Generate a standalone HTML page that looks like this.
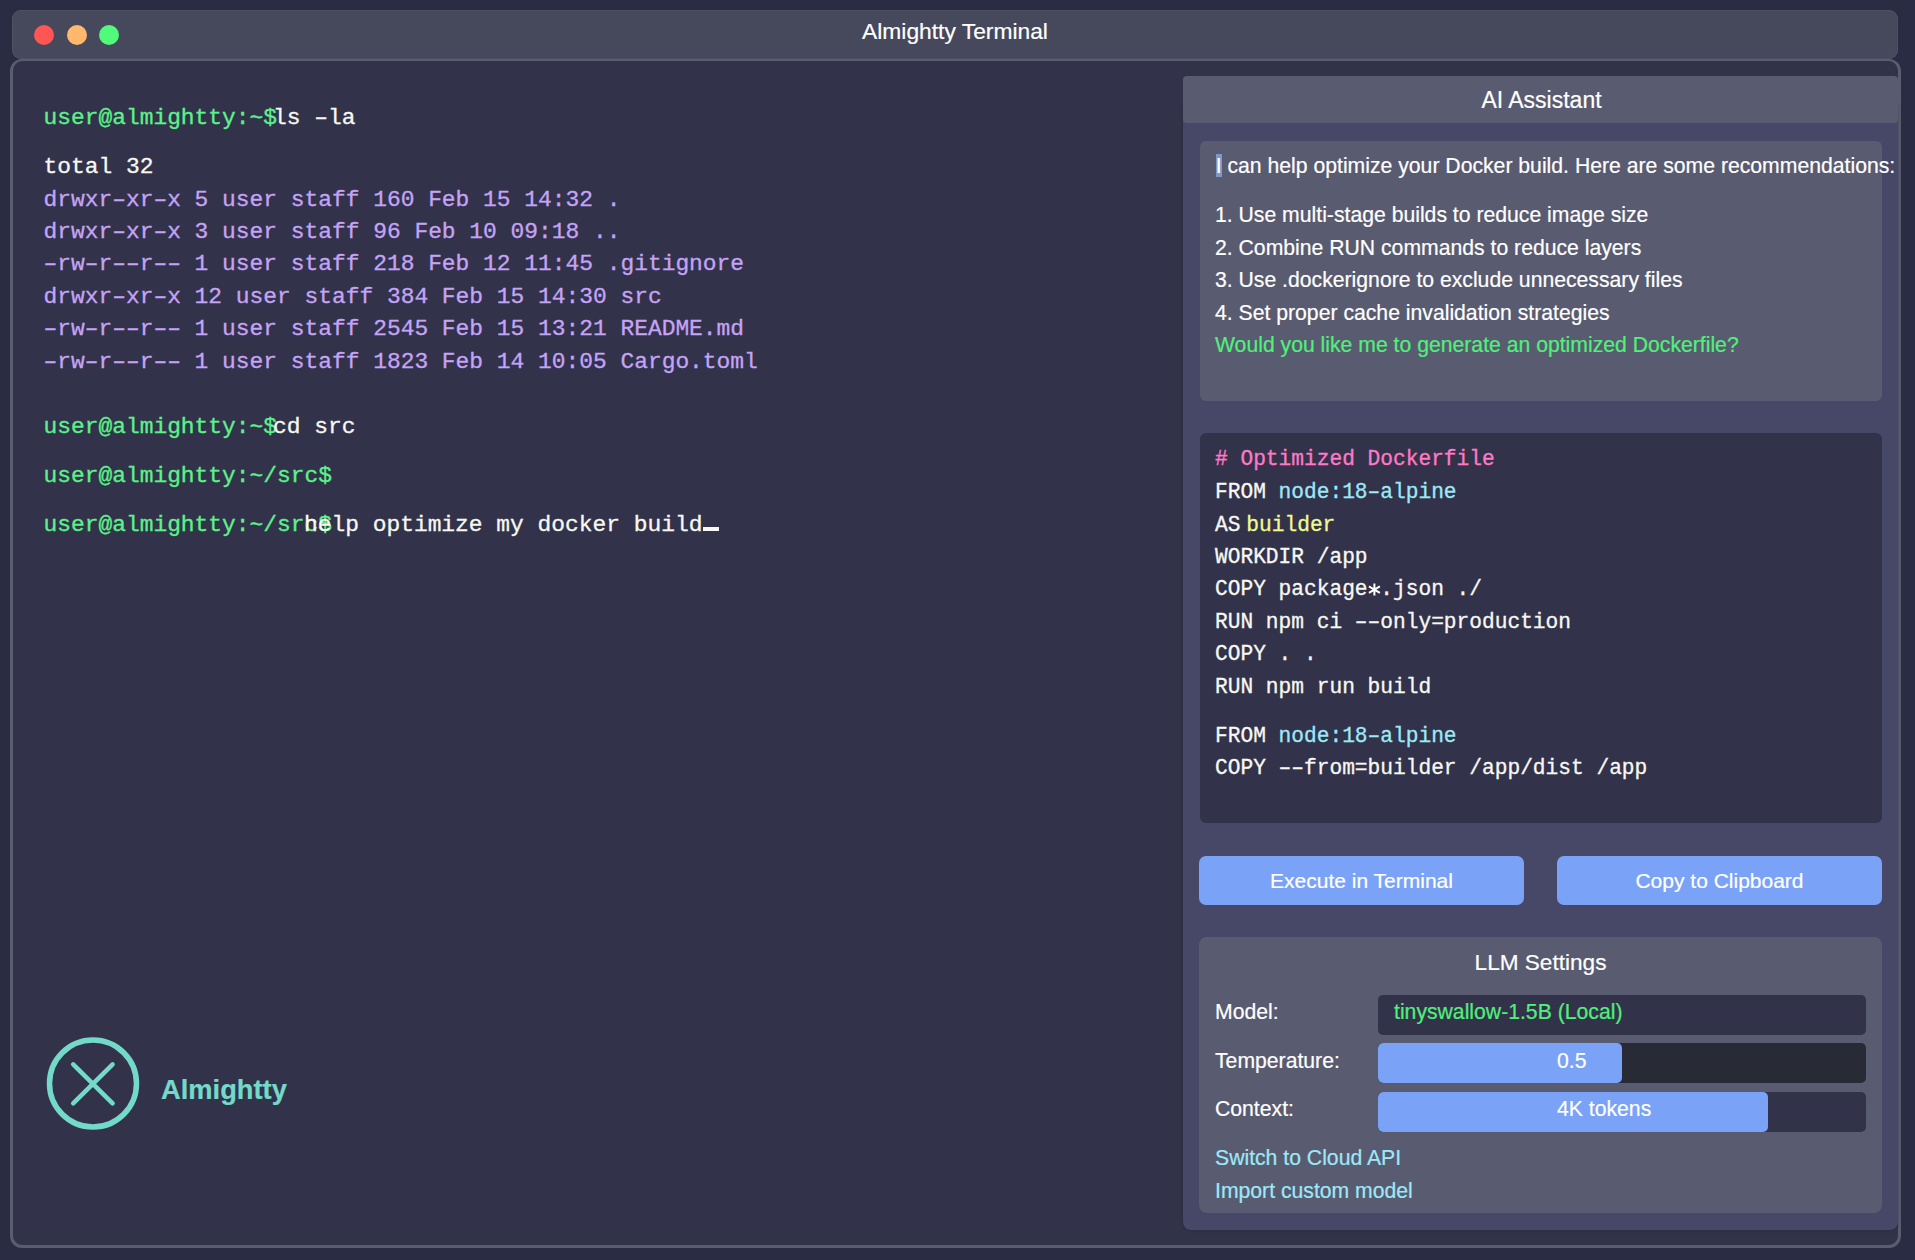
<!DOCTYPE html>
<html><head><meta charset="utf-8">
<style>
*{box-sizing:border-box;margin:0;padding:0}
html,body{width:1915px;height:1260px;overflow:hidden;background:#2a2c43}
body{position:relative;font-family:"Liberation Sans",sans-serif;color:#fff;-webkit-text-stroke:0.2px currentColor}
.abs{position:absolute}
#titlebar{left:12px;top:9.5px;width:1886px;height:49px;background:#46485c;border-radius:9px;box-shadow:inset 0 0 0 1px #4e5064}
.dot{position:absolute;width:20px;height:20px;border-radius:50%;top:24.7px}
#title{position:absolute;left:0;top:9.2px;width:1910px;text-align:center;font-size:22.8px;line-height:44px}
#win{left:10px;top:58.8px;width:1891px;height:1189.2px;border:3px solid #5a5c70;border-top-width:2px;border-radius:12px;background:#32334a}
.mono{font-family:"Liberation Mono",monospace;font-size:22.9px;white-space:pre;line-height:32.4px;-webkit-text-stroke:0.3px currentColor}
.code{font-size:21.2px;line-height:32.55px}
.cmd{margin-left:-4px}
.tl{position:absolute;left:43.5px}
.g{color:#5cf28a}.w{color:#f8f8f2}.p{color:#c6a3f6}.pk{color:#ff79c6}.cy{color:#9de9f8}.yl{color:#f1fa8c}
#panel{left:1183px;top:100px;width:715px;height:1130px;background:#474867;border-radius:8px;box-shadow:0 0 4px rgba(0,0,0,.18)}
#phead{left:1183px;top:75.5px;width:715px;height:47.5px;background:#595b70;border-radius:4px;text-align:center;font-size:23px;line-height:48px;padding-left:2px}
#msg{left:1199.5px;top:140.5px;width:682.5px;height:260px;background:#595b70;border-radius:6px}
.st{position:absolute;left:1215px;font-size:21.2px;line-height:32.4px;white-space:pre}
#code{left:1199.5px;top:433.2px;width:682.5px;height:390px;background:#32334a;border-radius:6px}
.btn{position:absolute;top:856px;width:325px;height:49px;background:#7aa2f7;border-radius:7px;text-align:center;font-size:21px;line-height:50.5px;color:#fff}
#llm{left:1199px;top:937px;width:683px;height:276px;background:#595b70;border-radius:8px}
.track{position:absolute;left:1378px;width:488px;height:40px;background:#282a36;border-radius:5px;overflow:hidden}
.fill{position:absolute;left:0;top:0;height:40px;background:#7aa2f7;border-radius:5px}
.lnk{color:#9de9f8}
</style></head><body>
<div id="titlebar" class="abs"></div>
<div class="dot" style="left:34px;background:#ff5555"></div>
<div class="dot" style="left:66.5px;background:#ffb86c"></div>
<div class="dot" style="left:99px;background:#50fa7b"></div>
<div id="title">Almightty Terminal</div>
<div id="win" class="abs"></div>

<!-- terminal lines -->
<div class="mono tl" style="top:101.9px"><span class="g">user@almightty:~$</span><span class="w cmd">ls –la</span></div>
<div class="mono tl w" style="top:150.9px">total 32</div>
<div class="mono tl p" style="top:183.5px">drwxr–xr–x 5 user staff 160 Feb 15 14:32 .</div>
<div class="mono tl p" style="top:215.9px">drwxr–xr–x 3 user staff 96 Feb 10 09:18 ..</div>
<div class="mono tl p" style="top:248.3px">–rw–r––r–– 1 user staff 218 Feb 12 11:45 .gitignore</div>
<div class="mono tl p" style="top:280.7px">drwxr–xr–x 12 user staff 384 Feb 15 14:30 src</div>
<div class="mono tl p" style="top:313.1px">–rw–r––r–– 1 user staff 2545 Feb 15 13:21 README.md</div>
<div class="mono tl p" style="top:345.5px">–rw–r––r–– 1 user staff 1823 Feb 14 10:05 Cargo.toml</div>
<div class="mono tl" style="top:410.8px"><span class="g">user@almightty:~$</span><span class="w cmd">cd src</span></div>
<div class="mono tl g" style="top:459.8px">user@almightty:~/src$</div>
<div class="mono tl g" style="top:508.8px">user@almightty:~/src$</div>
<div class="mono abs w" style="left:304px;top:508.8px">help optimize my docker build<span style="display:inline-block;width:16px;height:3.5px;background:#f8f8f2;vertical-align:baseline;margin-left:1px"></span></div>

<!-- logo -->
<svg class="abs" style="left:40px;top:1031px" width="108" height="108" viewBox="0 0 108 108">
<circle cx="53" cy="52.5" r="43.5" fill="none" stroke="#73daca" stroke-width="5.5"/>
<path d="M33.2 33.3 L72.6 72.3 M72.6 33.3 L33.2 72.3" stroke="#73daca" stroke-width="4.5" stroke-linecap="round"/>
</svg>
<div class="abs" style="left:161px;top:1073px;font-size:27.3px;font-weight:bold;color:#73daca;line-height:34px">Almightty</div>

<!-- AI panel -->
<div id="panel" class="abs"></div>
<div id="phead" class="abs">AI Assistant</div>
<div id="msg" class="abs"></div>
<div class="st" style="top:150.3px;left:1215.7px"><span style="background:#7e98c9">I</span> can help optimize your Docker build. Here are some recommendations:</div>
<div class="st" style="top:199.4px">1. Use multi-stage builds to reduce image size</div>
<div class="st" style="top:231.8px">2. Combine RUN commands to reduce layers</div>
<div class="st" style="top:264.2px">3. Use .dockerignore to exclude unnecessary files</div>
<div class="st" style="top:296.6px">4. Set proper cache invalidation strategies</div>
<div class="st" style="top:329px;color:#50f07b">Would you like me to generate an optimized Dockerfile?</div>

<div id="code" class="abs"></div>
<div class="mono code tl pk" style="left:1215px;top:443px"># Optimized Dockerfile</div>
<div class="mono code tl w" style="left:1215px;top:475.5px">FROM <span class="cy">node:18–alpine</span></div>
<div class="mono code tl w" style="left:1215px;top:508px">AS<span style="font-family:'Liberation Sans'"> </span><span class="yl">builder</span></div>
<div class="mono code tl w" style="left:1215px;top:540.5px">WORKDIR /app</div>
<div class="mono code tl w" style="left:1215px;top:573px">COPY package<span style="display:inline-block;width:0.6em;height:1px;position:relative"><svg style="position:absolute;left:0;top:-21px" width="13" height="24" viewBox="0 0 13 24"><path d="M6.4 10.6V22.6M0.9 13.4L11.9 19.8M0.9 19.8L11.9 13.4" stroke="#fff" stroke-width="2" stroke-linecap="butt"/></svg></span>.json ./</div>
<div class="mono code tl w" style="left:1215px;top:605.5px">RUN npm ci ––only=production</div>
<div class="mono code tl w" style="left:1215px;top:638px">COPY . .</div>
<div class="mono code tl w" style="left:1215px;top:670.5px">RUN npm run build</div>
<div class="mono code tl w" style="left:1215px;top:719.5px">FROM <span class="cy">node:18–alpine</span></div>
<div class="mono code tl w" style="left:1215px;top:752px">COPY ––from=builder /app/dist /app</div>

<div class="btn" style="left:1199px">Execute in Terminal</div>
<div class="btn" style="left:1557px">Copy to Clipboard</div>

<div id="llm" class="abs"></div>
<div class="abs" style="left:1199px;top:945.7px;width:683px;text-align:center;font-size:22.6px;line-height:34px">LLM Settings</div>
<div class="st" style="top:996px">Model:</div>
<div class="abs" style="left:1378px;top:995px;width:488px;height:40px;background:#32334a;border-radius:5px"></div>
<div class="st" style="left:1394px;top:996px;color:#50f07b">tinyswallow-1.5B (Local)</div>
<div class="st" style="top:1045px">Temperature:</div>
<div class="track" style="top:1043.3px"><div class="fill" style="width:244px"></div></div>
<div class="st" style="left:1557px;top:1045px">0.5</div>
<div class="st" style="top:1093px">Context:</div>
<div class="track" style="top:1092px;background:#32334a"><div class="fill" style="width:390px"></div></div>
<div class="st" style="left:1557px;top:1093px">4K tokens</div>
<div class="st lnk" style="top:1142px">Switch to Cloud API</div>
<div class="st lnk" style="top:1175px">Import custom model</div>
</body></html>
